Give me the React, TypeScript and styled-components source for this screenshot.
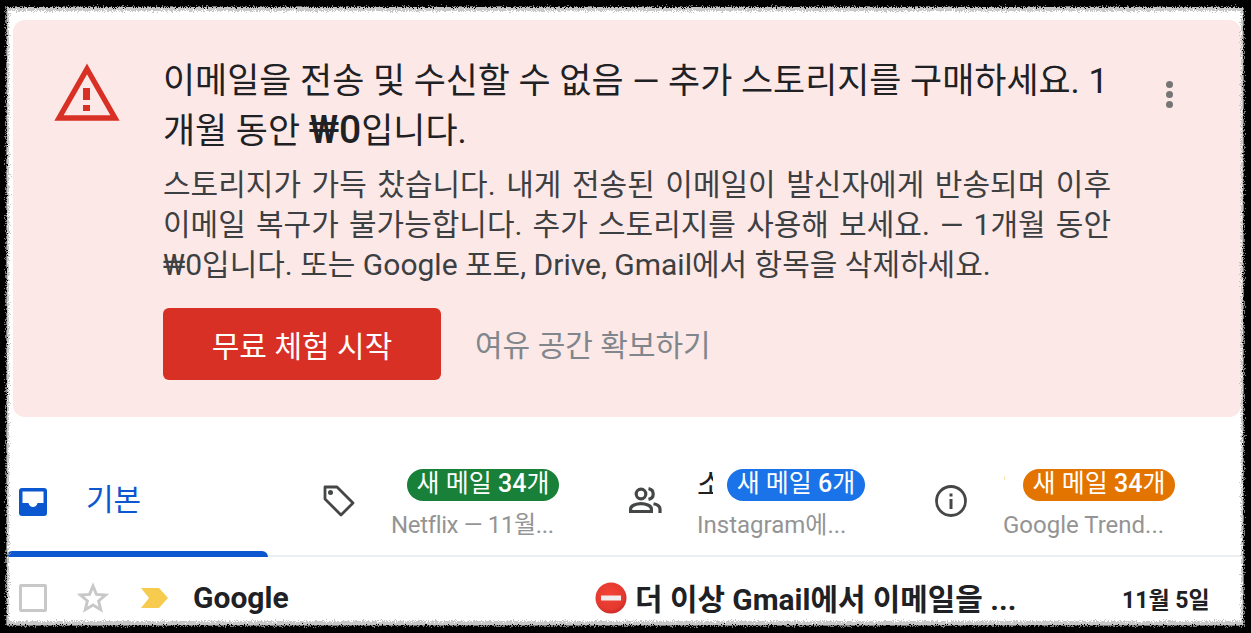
import React from "react";
import styled, { createGlobalStyle } from "styled-components";

const Global = createGlobalStyle`
  html, body { margin: 0; padding: 0; background: #000; }
  body { width: 1251px; height: 633px; overflow: hidden; font-family: Roboto, "Noto Sans CJK KR", sans-serif; }
  * { box-sizing: border-box; }
`;

const Sheet = styled.div`
  position: relative;
  margin: 7px 8px 8px 7px;
  width: 1236px;
  height: 618px;
  background: #fff;
  padding: 13px 0 0 6px;
  overflow: hidden;
`;

const TornEdge = styled.svg`
  position: fixed;
  left: 0;
  top: 0;
  width: 1251px;
  height: 633px;
  pointer-events: none;
`;

const Banner = styled.section`
  height: 397px;
  margin-right: 2px;
  background: #fce8e6;
  border-radius: 12px;
  padding: 38px 0 0 40px;
  display: flex;
`;

const WarnIcon = styled.svg`
  width: 68px;
  height: 60px;
  flex: none;
  margin-top: 5px;
  filter: blur(0.5px);
`;

const BannerBody = styled.div`
  margin-left: 42px;
  width: 948px;
  flex: none;
`;

const Title = styled.h1`
  margin: 0;
  font-size: 34.9px;
  line-height: 48px;
  font-weight: 400;
  color: #202124;
`;

const Won = styled.span`
  font-weight: 500;
  font-size: 39px;
`;

const Desc = styled.p`
  margin: 9px 0 0;
  font-size: 30px;
  line-height: 40px;
  color: #3c4043;
  text-align: justify;
`;

const Actions = styled.div`
  display: flex;
  align-items: center;
  margin-top: 23px;
`;

const Primary = styled.div`
  width: 278px;
  height: 72px;
  border-radius: 6px;
  background: #d93025;
  color: #fff;
  font-size: 30px;
  display: flex;
  align-items: center;
  justify-content: center;
`;

const Secondary = styled.div`
  margin-left: 34px;
  margin-bottom: 2px;
  font-size: 30px;
  color: #80868b;
`;

const More = styled.div`
  margin-left: 55px;
  margin-top: 23px;
  display: flex;
  flex-direction: column;
  gap: 3px;
  flex: none;
`;

const Dot = styled.span`
  width: 7px;
  height: 7px;
  border-radius: 50%;
  background: #757575;
`;

const Tabs = styled.nav`
  display: flex;
  height: 92px;
  margin: 48px 0 0 -6px;
  border-bottom: 2px solid #eceff1;
`;

const Tab = styled.div<{ $w: number }>`
  position: relative;
  width: ${(p) => p.$w}px;
  flex: none;
  display: flex;
  align-items: center;
  padding-bottom: 18px;
`;

const ActiveBar = styled.span`
  position: absolute;
  left: -1px;
  right: 0;
  bottom: -2px;
  height: 6px;
  background: #0b57d0;
  border-radius: 6px 6px 0 0;
`;

const PrimaryIcon = styled.svg`
  width: 28px;
  height: 28px;
  margin-left: 12px;
  margin-top: 2px;
  flex: none;
`;

const PrimaryLabel = styled.span`
  margin-left: 39px;
  margin-bottom: 8px;
  font-size: 30px;
  color: #0b57d0;
`;

const TabIcon = styled.div<{ $ml: number }>`
  margin-left: ${(p) => p.$ml}px;
  width: 34px;
  height: 34px;
  flex: none;
  color: #444746;
  display: flex;
`;

const TabText = styled.div<{ $ml: number }>`
  margin-left: ${(p) => p.$ml}px;
  width: 200px;
  flex: none;
  align-self: flex-start;
  padding-top: 4px;
`;

const TopLine = styled.div<{ $indent?: number }>`
  display: flex;
  align-items: center;
  height: 32px;
  padding-left: ${(p) => p.$indent ?? 0}px;
`;

const ClipTitle = styled.span<{ $w: number; $gap: number }>`
  width: ${(p) => p.$w}px;
  margin-right: ${(p) => p.$gap}px;
  overflow: hidden;
  white-space: nowrap;
  flex: none;
  font-size: 30px;
  line-height: 32px;
  color: #202124;
`;

const Badge = styled.span<{ $bg: string; $w: number }>`
  flex: none;
  width: ${(p) => p.$w}px;
  height: 32px;
  border-radius: 16px;
  background: ${(p) => p.$bg};
  color: #fff;
  font-size: 25px;
  line-height: 29px;
  font-weight: 400;
  text-align: center;
  white-space: nowrap;
`;

const Count = styled.b`
  font-weight: 500;
`;

const Sub = styled.div<{ $tight?: boolean }>`
  margin-top: 8px;
  font-size: 24px;
  line-height: 32px;
  color: #949494;
  white-space: nowrap;
  letter-spacing: ${(p) => (p.$tight ? "-0.35px" : "0")};
`;

const Row = styled.div`
  display: flex;
  align-items: center;
  height: 70px;
  margin-left: -6px;
  padding-top: 12px;
`;

const Check = styled.span`
  width: 28px;
  height: 28px;
  margin-left: 12px;
  border: 3px solid #c8c8c8;
  border-radius: 2px;
  flex: none;
`;

const Star = styled.svg`
  width: 32px;
  height: 32px;
  margin-left: 30px;
  flex: none;
`;

const Marker = styled.svg`
  width: 27px;
  height: 20px;
  margin-left: 32px;
  flex: none;
`;

const Sender = styled.span`
  margin-left: 25px;
  margin-bottom: 2px;
  width: 402px;
  flex: none;
  font-size: 30px;
  font-weight: 700;
  color: #202124;
`;

const Stop = styled.svg`
  width: 32px;
  height: 32px;
  flex: none;
`;

const Subject = styled.span`
  margin-left: 8px;
  margin-bottom: 2px;
  width: 487px;
  flex: none;
  font-size: 29.9px;
  font-weight: 700;
  color: #202124;
  white-space: nowrap;
`;

const DateText = styled.span`
  font-size: 23px;
  font-weight: 700;
  color: #202124;
  white-space: nowrap;
`;

export default function App() {
  return (
    <>
      <Global />
      <Sheet>
        <Banner>
          <WarnIcon viewBox="0 0 68 60">
            <path d="M34 6 L62 55 H6 Z" fill="none" stroke="#d93025" strokeWidth="5.4" />
            <rect x="30" y="25" width="7" height="12" fill="#d93025" />
            <rect x="30" y="42" width="7" height="6" fill="#d93025" />
          </WarnIcon>
          <BannerBody>
            <Title>이메일을 전송 및 수신할 수 없음 — 추가 스토리지를 구매하세요. 1개월 동안 <Won>₩0</Won>입니다.</Title>
            <Desc>
              스토리지가 가득 찼습니다. 내게 전송된 이메일이 발신자에게 반송되며 이후 이메일 복구가 불가능합니다. 추가 스토리지를 사용해 보세요. — 1개월 동안 ₩0입니다. 또는 Google 포토, Drive, Gmail에서 항목을 삭제하세요.
            </Desc>
            <Actions>
              <Primary>무료 체험 시작</Primary>
              <Secondary>여유 공간 확보하기</Secondary>
            </Actions>
          </BannerBody>
          <More>
            <Dot />
            <Dot />
            <Dot />
          </More>
        </Banner>
        <Tabs>
          <Tab $w={261}>
            <PrimaryIcon viewBox="0 0 28 28">
              <rect width="28" height="28" rx="3" fill="#0b57d0" />
              <path d="M3.5 3.5 H24.5 V15 H18.5 C18 17.5 16 19 14 19 C12 19 10 17.5 9.5 15 H3.5 Z" fill="#fff" />
            </PrimaryIcon>
            <PrimaryLabel>기본</PrimaryLabel>
            <ActiveBar />
          </Tab>
          <Tab $w={306}>
            <TabIcon $ml={54}>
              <svg viewBox="0 0 34 34" width="34" height="34" fill="none" stroke="currentColor" strokeWidth="2.8" strokeLinejoin="round">
                <path d="M3 3 H15 L31 19 L19 31 L3 15 Z" />
                <circle cx="8.5" cy="8.5" r="2.5" fill="currentColor" stroke="none" />
              </svg>
            </TabIcon>
            <TabText $ml={35}>
              <TopLine $indent={16}>
                <Badge $bg="#188038" $w={152}>새 메일 <Count>34</Count>개</Badge>
              </TopLine>
              <Sub $tight>Netflix — 11월...</Sub>
            </TabText>
          </Tab>
          <Tab $w={306}>
            <TabIcon $ml={54}>
              <svg viewBox="0 0 34 34" width="34" height="34" fill="none" stroke="currentColor" strokeWidth="3.2">
                <circle cx="13" cy="10" r="4.8" />
                <path d="M2.6 27 V25 C2.6 21.5 8.5 19.6 13 19.6 C17.5 19.6 23.4 21.5 23.4 25 V27" />
                <path d="M1 27.5 H25" strokeWidth="3" />
                <path d="M20.5 4.6 C23.5 5.2 25.2 7.5 25.2 10 C25.2 12.5 23.5 14.8 20.5 15.4" />
                <path d="M25.5 19.8 C29.5 20.6 32 22.3 32 25 V29" />
              </svg>
            </TabIcon>
            <TabText $ml={35}>
              <TopLine>
                <ClipTitle $w={16} $gap={14}>소셜</ClipTitle>
                <Badge $bg="#1a73e8" $w={138}>새 메일 <Count>6</Count>개</Badge>
              </TopLine>
              <Sub>Instagram에...</Sub>
            </TabText>
          </Tab>
          <Tab $w={300}>
            <TabIcon $ml={54}>
              <svg viewBox="0 0 34 34" width="34" height="34" fill="none" stroke="currentColor" strokeWidth="2.8">
                <circle cx="17" cy="17" r="14.5" />
                <rect x="15.5" y="15" width="3" height="10" fill="currentColor" stroke="none" />
                <rect x="15.5" y="9.5" width="3" height="3" fill="currentColor" stroke="none" />
              </svg>
            </TabIcon>
            <TabText $ml={35}>
              <TopLine>
                <ClipTitle $w={2} $gap={18}>업데이트</ClipTitle>
                <Badge $bg="#e37400" $w={152}>새 메일 <Count>34</Count>개</Badge>
              </TopLine>
              <Sub>Google Trend...</Sub>
            </TabText>
          </Tab>
        </Tabs>
        <Row>
          <Check />
          <Star viewBox="0 0 24 24">
            <path d="M12 3 L14.6 9.3 L21.4 9.8 L16.2 14.2 L17.8 20.8 L12 17.3 L6.2 20.8 L7.8 14.2 L2.6 9.8 L9.4 9.3 Z" fill="none" stroke="#c8c8c8" strokeWidth="2.2" />
          </Star>
          <Marker viewBox="0 0 27 20">
            <path d="M0 0 H18 L27 10 L18 20 H0 L8 10 Z" fill="#f7cb4d" />
          </Marker>
          <Sender>Google</Sender>
          <Stop viewBox="0 0 32 32">
            <defs>
              <radialGradient id="stopFill" cx="45%" cy="40%" r="65%">
                <stop offset="0%" stopColor="#f44336" />
                <stop offset="70%" stopColor="#e53a30" />
                <stop offset="100%" stopColor="#c62828" />
              </radialGradient>
            </defs>
            <circle cx="16" cy="16" r="15.5" fill="url(#stopFill)" />
            <rect x="6" y="13.5" width="20" height="5" fill="#f1eded" />
          </Stop>
          <Subject>더 이상 Gmail에서 이메일을 ...</Subject>
          <DateText>11월 5일</DateText>
        </Row>
      </Sheet>
      <TornEdge viewBox="0 0 1251 633">
        <defs>
          <filter id="rough" x="0" y="0" width="100%" height="100%">
            <feTurbulence type="fractalNoise" baseFrequency="0.9" numOctaves="2" seed="4" />
            <feDisplacementMap in="SourceGraphic" scale="8" />
          </filter>
        </defs>
        <path
          filter="url(#rough)"
          fillRule="evenodd"
          fill="#b0b0b0"
          d="M-10 -10 H1261 V643 H-10 Z M9 11 H1241 V621 H9 Z"
          opacity="0.7"
        />
        <path
          filter="url(#rough)"
          fillRule="evenodd"
          fill="#000"
          d="M-10 -10 H1261 V643 H-10 Z M6 7 H1244 V626 H6 Z"
        />
      </TornEdge>
    </>
  );
}
